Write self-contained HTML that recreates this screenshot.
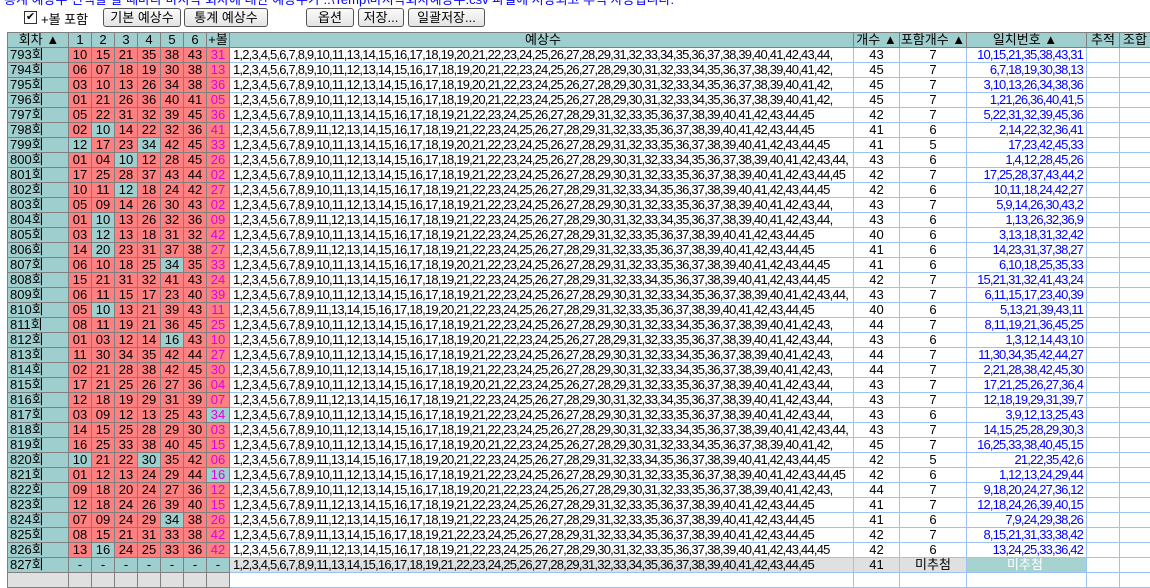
<!DOCTYPE html>
<html><head><meta charset="utf-8"><style>
body{margin:0;width:1150px;height:581px;overflow:hidden;background:#fff;font-family:"Liberation Sans","Noto Sans CJK KR",sans-serif;position:relative}
.top{position:absolute;left:4px;top:-11px;color:#0000ff;font-size:13px;white-space:nowrap}
.cb{position:absolute;left:24px;top:11px;width:11px;height:11px;border:1px solid #333;background:#fff;font-size:11px;line-height:11px;text-align:center}
.lbl{position:absolute;left:41px;top:9px;font-size:13px}
.btn{position:absolute;top:8px;border:1px solid #555;border-radius:3px;background:linear-gradient(#fafafa,#e4e4e4);font-size:13px;line-height:17px;text-align:center;box-sizing:border-box;height:19px}
.vl{position:absolute;left:7px;top:32px;width:1px;height:549px;background:#808080}
table{position:absolute;left:7px;top:32px;border-collapse:collapse;table-layout:fixed;width:1144px}
td{height:14px;padding:0;border:1px solid #808080;font-size:13px;line-height:14px;white-space:nowrap;overflow:hidden;text-align:center;color:#000}
tr.h td{background:#9ecfce;border-color:#808080}
td:first-child{background:#9ecfce;text-align:left;padding-left:2px}
td:nth-child(n+2){background:#ff8080}
td:nth-child(8){color:#e000e0}
td:nth-child(n+9){background:#fff;border-color:#9cc3f0}
td.t{background:#9ecfce}
td:nth-child(9){text-align:left;letter-spacing:-0.8px;padding-left:3px}
td:nth-child(12){text-align:right;color:#0000ff;letter-spacing:-0.85px;padding-right:3px}
tr.h td:first-child{text-align:center}
tr.h td{color:#000!important;letter-spacing:0!important}
tr.l td:nth-child(n+2){background:#9ecfce}
tr.l td:nth-child(n+9){background:#e0e0e0}
tr.l td:nth-child(12){background:#a6d2cf;color:#fff;text-align:center;letter-spacing:0}
tr.l td:nth-child(n+13){background:#fff}
tr.e td:nth-child(-n+8){background:#e0e0e0}
</style></head><body>
<div class="top">통계 예상수 선택할 할 때마다 마지막 회차에 대한 예상수가 ..\Temp\마지막회차예상수.csv 파일에 저장되고 추적 자동입니다.</div>
<div class="cb">✔</div><div class="lbl">+볼 포함</div>
<div class="btn" style="left:103px;width:78px">기본 예상수</div>
<div class="btn" style="left:184px;width:84px">통계 예상수</div>
<div class="btn" style="left:306px;width:48px">옵션</div>
<div class="btn" style="left:358px;width:46px">저장...</div>
<div class="btn" style="left:408px;width:77px">일괄저장...</div>
<div class="vl"></div>
<table>
<colgroup><col style="width:61px"><col style="width:23px"><col style="width:23px"><col style="width:23px"><col style="width:23px"><col style="width:23px"><col style="width:23px"><col style="width:23px"><col style="width:624px"><col style="width:46px"><col style="width:67px"><col style="width:120px"><col style="width:33px"><col style="width:31px"></colgroup>
<tr class="h"><td>회차 ▲</td><td>1</td><td>2</td><td>3</td><td>4</td><td>5</td><td>6</td><td>+볼</td><td style="text-align:center">예상수</td><td>개수 ▲</td><td>포함개수 ▲</td><td style="text-align:center">일치번호 ▲</td><td>추적</td><td>조합</td></tr>
<tr><td>793회</td><td>10</td><td>15</td><td>21</td><td>35</td><td>38</td><td>43</td><td>31</td><td>1,2,3,4,5,6,7,8,9,10,11,13,14,15,16,17,18,19,20,21,22,23,24,25,26,27,28,29,31,32,33,34,35,36,37,38,39,40,41,42,43,44,</td><td>43</td><td>7</td><td>10,15,21,35,38,43,31</td><td></td><td></td></tr>
<tr><td>794회</td><td>06</td><td>07</td><td>18</td><td>19</td><td>30</td><td>38</td><td>13</td><td>1,2,3,4,5,6,7,8,9,10,11,12,13,14,15,16,17,18,19,20,21,22,23,24,25,26,27,28,29,30,31,32,33,34,35,36,37,38,39,40,41,42,</td><td>45</td><td>7</td><td>6,7,18,19,30,38,13</td><td></td><td></td></tr>
<tr><td>795회</td><td>03</td><td>10</td><td>13</td><td>26</td><td>34</td><td>38</td><td>36</td><td>1,2,3,4,5,6,7,8,9,10,11,12,13,14,15,16,17,18,19,20,21,22,23,24,25,26,27,28,29,30,31,32,33,34,35,36,37,38,39,40,41,42,</td><td>45</td><td>7</td><td>3,10,13,26,34,38,36</td><td></td><td></td></tr>
<tr><td>796회</td><td>01</td><td>21</td><td>26</td><td>36</td><td>40</td><td>41</td><td>05</td><td>1,2,3,4,5,6,7,8,9,10,11,12,13,14,15,16,17,18,19,20,21,22,23,24,25,26,27,28,29,30,31,32,33,34,35,36,37,38,39,40,41,42,</td><td>45</td><td>7</td><td>1,21,26,36,40,41,5</td><td></td><td></td></tr>
<tr><td>797회</td><td>05</td><td>22</td><td>31</td><td>32</td><td>39</td><td>45</td><td>36</td><td>1,2,3,4,5,6,7,8,9,10,11,13,14,15,16,17,18,19,21,22,23,24,25,26,27,28,29,31,32,33,35,36,37,38,39,40,41,42,43,44,45</td><td>42</td><td>7</td><td>5,22,31,32,39,45,36</td><td></td><td></td></tr>
<tr><td>798회</td><td>02</td><td class="t">10</td><td>14</td><td>22</td><td>32</td><td>36</td><td>41</td><td>1,2,3,4,5,6,7,8,9,11,12,13,14,15,16,17,18,19,21,22,23,24,25,26,27,28,29,31,32,33,35,36,37,38,39,40,41,42,43,44,45</td><td>41</td><td>6</td><td>2,14,22,32,36,41</td><td></td><td></td></tr>
<tr><td>799회</td><td class="t">12</td><td>17</td><td>23</td><td class="t">34</td><td>42</td><td>45</td><td>33</td><td>1,2,3,4,5,6,7,8,9,10,11,13,14,15,16,17,18,19,20,21,22,23,24,25,26,27,28,29,31,32,33,35,36,37,38,39,40,41,42,43,44,45</td><td>41</td><td>5</td><td>17,23,42,45,33</td><td></td><td></td></tr>
<tr><td>800회</td><td>01</td><td>04</td><td class="t">10</td><td>12</td><td>28</td><td>45</td><td>26</td><td>1,2,3,4,5,6,7,8,9,10,11,12,13,14,15,16,17,18,19,21,22,23,24,25,26,27,28,29,30,31,32,33,34,35,36,37,38,39,40,41,42,43,44,</td><td>43</td><td>6</td><td>1,4,12,28,45,26</td><td></td><td></td></tr>
<tr><td>801회</td><td>17</td><td>25</td><td>28</td><td>37</td><td>43</td><td>44</td><td>02</td><td>1,2,3,4,5,6,7,8,9,10,11,12,13,14,15,16,17,18,19,21,22,23,24,25,26,27,28,29,30,31,32,33,35,36,37,38,39,40,41,42,43,44,45</td><td>42</td><td>7</td><td>17,25,28,37,43,44,2</td><td></td><td></td></tr>
<tr><td>802회</td><td>10</td><td>11</td><td class="t">12</td><td>18</td><td>24</td><td>42</td><td>27</td><td>1,2,3,4,5,6,7,8,9,10,11,13,14,15,16,17,18,19,21,22,23,24,25,26,27,28,29,31,32,33,34,35,36,37,38,39,40,41,42,43,44,45</td><td>42</td><td>6</td><td>10,11,18,24,42,27</td><td></td><td></td></tr>
<tr><td>803회</td><td>05</td><td>09</td><td>14</td><td>26</td><td>30</td><td>43</td><td>02</td><td>1,2,3,4,5,6,7,8,9,10,11,12,13,14,15,16,17,18,19,21,22,23,24,25,26,27,28,29,30,31,32,33,35,36,37,38,39,40,41,42,43,44,</td><td>43</td><td>7</td><td>5,9,14,26,30,43,2</td><td></td><td></td></tr>
<tr><td>804회</td><td>01</td><td class="t">10</td><td>13</td><td>26</td><td>32</td><td>36</td><td>09</td><td>1,2,3,4,5,6,7,8,9,11,12,13,14,15,16,17,18,19,21,22,23,24,25,26,27,28,29,30,31,32,33,34,35,36,37,38,39,40,41,42,43,44,</td><td>43</td><td>6</td><td>1,13,26,32,36,9</td><td></td><td></td></tr>
<tr><td>805회</td><td>03</td><td class="t">12</td><td>13</td><td>18</td><td>31</td><td>32</td><td>42</td><td>1,2,3,4,5,6,7,8,9,10,11,13,14,15,16,17,18,19,21,22,23,24,25,26,27,28,29,31,32,33,35,36,37,38,39,40,41,42,43,44,45</td><td>40</td><td>6</td><td>3,13,18,31,32,42</td><td></td><td></td></tr>
<tr><td>806회</td><td>14</td><td class="t">20</td><td>23</td><td>31</td><td>37</td><td>38</td><td>27</td><td>1,2,3,4,5,6,7,8,9,11,12,13,14,15,16,17,18,19,21,22,23,24,25,26,27,28,29,31,32,33,35,36,37,38,39,40,41,42,43,44,45</td><td>41</td><td>6</td><td>14,23,31,37,38,27</td><td></td><td></td></tr>
<tr><td>807회</td><td>06</td><td>10</td><td>18</td><td>25</td><td class="t">34</td><td>35</td><td>33</td><td>1,2,3,4,5,6,7,8,9,10,11,13,14,15,16,17,18,19,20,21,22,23,24,25,26,27,28,29,31,32,33,35,36,37,38,39,40,41,42,43,44,45</td><td>41</td><td>6</td><td>6,10,18,25,35,33</td><td></td><td></td></tr>
<tr><td>808회</td><td>15</td><td>21</td><td>31</td><td>32</td><td>41</td><td>43</td><td>24</td><td>1,2,3,4,5,6,7,8,9,10,11,13,14,15,16,17,18,19,21,22,23,24,25,26,27,28,29,31,32,33,34,35,36,37,38,39,40,41,42,43,44,45</td><td>42</td><td>7</td><td>15,21,31,32,41,43,24</td><td></td><td></td></tr>
<tr><td>809회</td><td>06</td><td>11</td><td>15</td><td>17</td><td>23</td><td>40</td><td>39</td><td>1,2,3,4,5,6,7,8,9,10,11,12,13,14,15,16,17,18,19,21,22,23,24,25,26,27,28,29,30,31,32,33,34,35,36,37,38,39,40,41,42,43,44,</td><td>43</td><td>7</td><td>6,11,15,17,23,40,39</td><td></td><td></td></tr>
<tr><td>810회</td><td>05</td><td class="t">10</td><td>13</td><td>21</td><td>39</td><td>43</td><td>11</td><td>1,2,3,4,5,6,7,8,9,11,13,14,15,16,17,18,19,20,21,22,23,24,25,26,27,28,29,31,32,33,35,36,37,38,39,40,41,42,43,44,45</td><td>40</td><td>6</td><td>5,13,21,39,43,11</td><td></td><td></td></tr>
<tr><td>811회</td><td>08</td><td>11</td><td>19</td><td>21</td><td>36</td><td>45</td><td>25</td><td>1,2,3,4,5,6,7,8,9,10,11,12,13,14,15,16,17,18,19,21,22,23,24,25,26,27,28,29,30,31,32,33,34,35,36,37,38,39,40,41,42,43,</td><td>44</td><td>7</td><td>8,11,19,21,36,45,25</td><td></td><td></td></tr>
<tr><td>812회</td><td>01</td><td>03</td><td>12</td><td>14</td><td class="t">16</td><td>43</td><td>10</td><td>1,2,3,4,5,6,7,8,9,10,11,12,13,14,15,16,17,18,19,20,21,22,23,24,25,26,27,28,29,31,32,33,35,36,37,38,39,40,41,42,43,44,</td><td>43</td><td>6</td><td>1,3,12,14,43,10</td><td></td><td></td></tr>
<tr><td>813회</td><td>11</td><td>30</td><td>34</td><td>35</td><td>42</td><td>44</td><td>27</td><td>1,2,3,4,5,6,7,8,9,10,11,12,13,14,15,16,17,18,19,21,22,23,24,25,26,27,28,29,30,31,32,33,34,35,36,37,38,39,40,41,42,43,</td><td>44</td><td>7</td><td>11,30,34,35,42,44,27</td><td></td><td></td></tr>
<tr><td>814회</td><td>02</td><td>21</td><td>28</td><td>38</td><td>42</td><td>45</td><td>30</td><td>1,2,3,4,5,6,7,8,9,10,11,12,13,14,15,16,17,18,19,21,22,23,24,25,26,27,28,29,30,31,32,33,34,35,36,37,38,39,40,41,42,43,</td><td>44</td><td>7</td><td>2,21,28,38,42,45,30</td><td></td><td></td></tr>
<tr><td>815회</td><td>17</td><td>21</td><td>25</td><td>26</td><td>27</td><td>36</td><td>04</td><td>1,2,3,4,5,6,7,8,9,10,11,12,13,14,15,16,17,18,19,20,21,22,23,24,25,26,27,28,29,31,32,33,35,36,37,38,39,40,41,42,43,44,</td><td>43</td><td>7</td><td>17,21,25,26,27,36,4</td><td></td><td></td></tr>
<tr><td>816회</td><td>12</td><td>18</td><td>19</td><td>29</td><td>31</td><td>39</td><td>07</td><td>1,2,3,4,5,6,7,8,9,11,12,13,14,15,16,17,18,19,21,22,23,24,25,26,27,28,29,30,31,32,33,34,35,36,37,38,39,40,41,42,43,44,</td><td>43</td><td>7</td><td>12,18,19,29,31,39,7</td><td></td><td></td></tr>
<tr><td>817회</td><td>03</td><td>09</td><td>12</td><td>13</td><td>25</td><td>43</td><td class="t">34</td><td>1,2,3,4,5,6,7,8,9,10,11,12,13,14,15,16,17,18,19,21,22,23,24,25,26,27,28,29,30,31,32,33,35,36,37,38,39,40,41,42,43,44,</td><td>43</td><td>6</td><td>3,9,12,13,25,43</td><td></td><td></td></tr>
<tr><td>818회</td><td>14</td><td>15</td><td>25</td><td>28</td><td>29</td><td>30</td><td>03</td><td>1,2,3,4,5,6,7,8,9,10,11,12,13,14,15,16,17,18,19,21,22,23,24,25,26,27,28,29,30,31,32,33,34,35,36,37,38,39,40,41,42,43,44,</td><td>43</td><td>7</td><td>14,15,25,28,29,30,3</td><td></td><td></td></tr>
<tr><td>819회</td><td>16</td><td>25</td><td>33</td><td>38</td><td>40</td><td>45</td><td>15</td><td>1,2,3,4,5,6,7,8,9,10,11,12,13,14,15,16,17,18,19,20,21,22,23,24,25,26,27,28,29,30,31,32,33,34,35,36,37,38,39,40,41,42,</td><td>45</td><td>7</td><td>16,25,33,38,40,45,15</td><td></td><td></td></tr>
<tr><td>820회</td><td class="t">10</td><td>21</td><td>22</td><td class="t">30</td><td>35</td><td>42</td><td>06</td><td>1,2,3,4,5,6,7,8,9,11,13,14,15,16,17,18,19,20,21,22,23,24,25,26,27,28,29,31,32,33,34,35,36,37,38,39,40,41,42,43,44,45</td><td>42</td><td>5</td><td>21,22,35,42,6</td><td></td><td></td></tr>
<tr><td>821회</td><td>01</td><td>12</td><td>13</td><td>24</td><td>29</td><td>44</td><td class="t">16</td><td>1,2,3,4,5,6,7,8,9,10,11,12,13,14,15,16,17,18,19,21,22,23,24,25,26,27,28,29,30,31,32,33,35,36,37,38,39,40,41,42,43,44,45</td><td>42</td><td>6</td><td>1,12,13,24,29,44</td><td></td><td></td></tr>
<tr><td>822회</td><td>09</td><td>18</td><td>20</td><td>24</td><td>27</td><td>36</td><td>12</td><td>1,2,3,4,5,6,7,8,9,10,11,12,13,14,15,16,17,18,19,20,21,22,23,24,25,26,27,28,29,30,31,32,33,35,36,37,38,39,40,41,42,43,</td><td>44</td><td>7</td><td>9,18,20,24,27,36,12</td><td></td><td></td></tr>
<tr><td>823회</td><td>12</td><td>18</td><td>24</td><td>26</td><td>39</td><td>40</td><td>15</td><td>1,2,3,4,5,6,7,8,9,11,12,13,14,15,16,17,18,19,21,22,23,24,25,26,27,28,29,31,32,33,35,36,37,38,39,40,41,42,43,44,45</td><td>41</td><td>7</td><td>12,18,24,26,39,40,15</td><td></td><td></td></tr>
<tr><td>824회</td><td>07</td><td>09</td><td>24</td><td>29</td><td class="t">34</td><td>38</td><td>26</td><td>1,2,3,4,5,6,7,8,9,11,12,13,14,15,16,17,18,19,21,22,23,24,25,26,27,28,29,31,32,33,35,36,37,38,39,40,41,42,43,44,45</td><td>41</td><td>6</td><td>7,9,24,29,38,26</td><td></td><td></td></tr>
<tr><td>825회</td><td>08</td><td>15</td><td>21</td><td>31</td><td>33</td><td>38</td><td>42</td><td>1,2,3,4,5,6,7,8,9,11,13,14,15,16,17,18,19,21,22,23,24,25,26,27,28,29,31,32,33,34,35,36,37,38,39,40,41,42,43,44,45</td><td>42</td><td>7</td><td>8,15,21,31,33,38,42</td><td></td><td></td></tr>
<tr><td>826회</td><td>13</td><td class="t">16</td><td>24</td><td>25</td><td>33</td><td>36</td><td>42</td><td>1,2,3,4,5,6,7,8,9,11,12,13,14,15,16,17,18,19,21,22,23,24,25,26,27,28,29,30,31,32,33,35,36,37,38,39,40,41,42,43,44,45</td><td>42</td><td>6</td><td>13,24,25,33,36,42</td><td></td><td></td></tr>
<tr class="l"><td>827회</td><td>-</td><td>-</td><td>-</td><td>-</td><td>-</td><td>-</td><td style="color:#000">-</td><td>1,2,3,4,5,6,7,8,9,11,13,14,15,16,17,18,19,21,22,23,24,25,26,27,28,29,31,32,33,34,35,36,37,38,39,40,41,42,43,44,45</td><td>41</td><td>미추첨</td><td>미추첨</td><td></td><td></td></tr>
<tr class="e"><td></td><td></td><td></td><td></td><td></td><td></td><td></td><td></td><td></td><td></td><td></td><td></td><td></td><td></td></tr>
</table>
</body></html>
